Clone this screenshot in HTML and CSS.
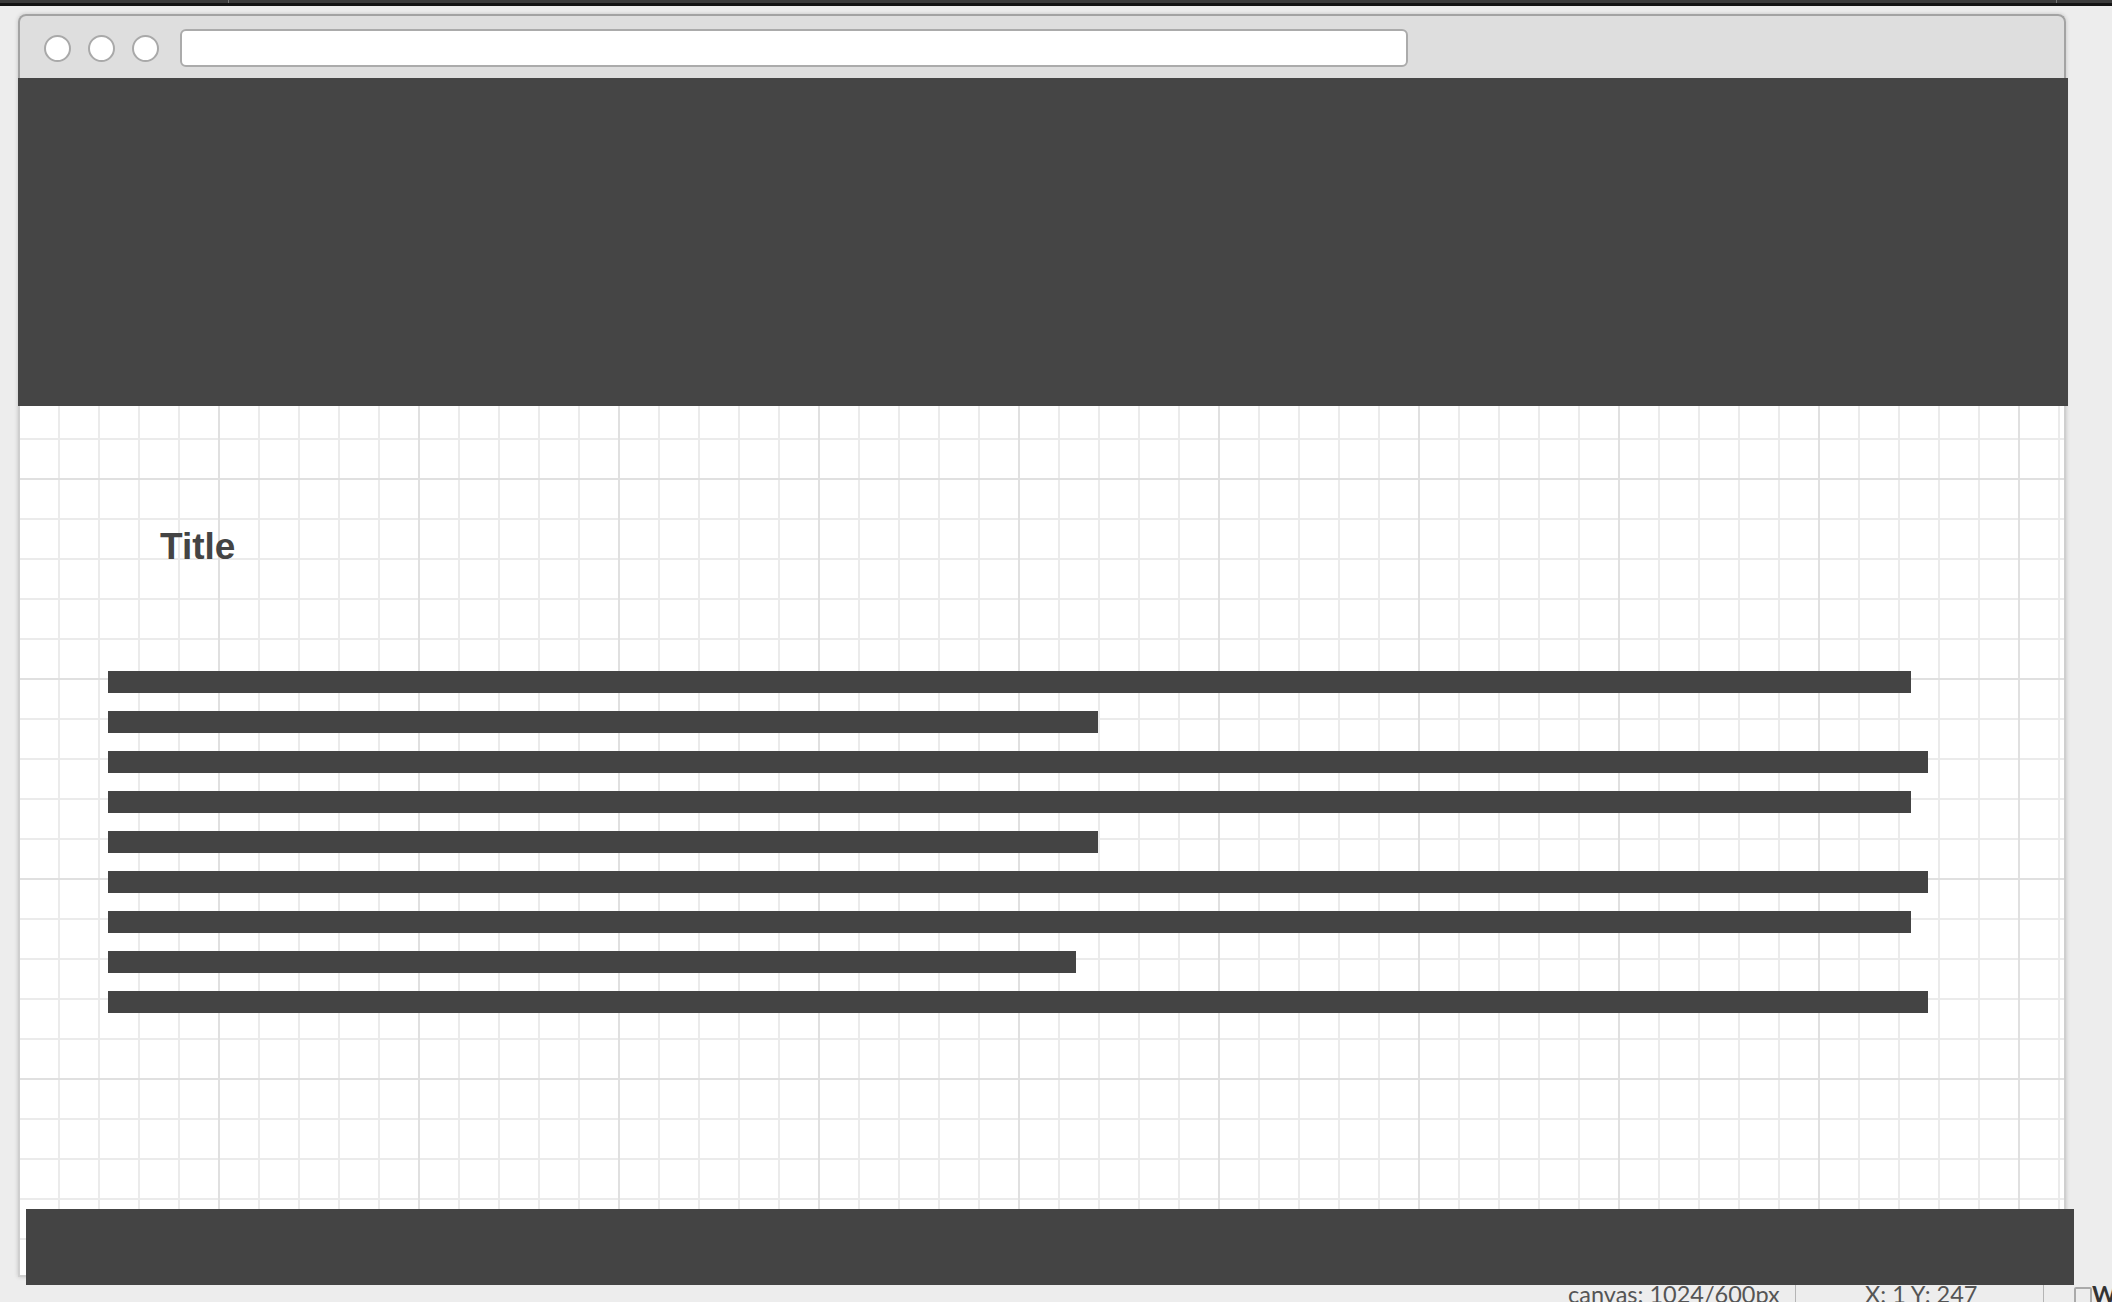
FILE: index.html
```html
<!DOCTYPE html>
<html lang="en">
<head>
<meta charset="utf-8">
<title>Wireframe</title>
<link rel="stylesheet" href="styles.css">
</head>
<body>
  <div class="topstrip">
    <div class="strip-seg strip-a"></div>
    <div class="strip-seg strip-b"></div>
    <div class="strip-seg strip-c"></div>
  </div>
  <div class="window">
    <div class="chrome">
      <span class="dot"></span>
      <span class="dot"></span>
      <span class="dot"></span>
      <div class="address"></div>
    </div>
    <div class="header"></div>
    <div class="canvas">
      <h1 class="title">Title</h1>
      <div class="lines">
        <div class="bar" style="width:1803px"></div>
        <div class="bar" style="width:990px"></div>
        <div class="bar" style="width:1820px"></div>
        <div class="bar" style="width:1803px"></div>
        <div class="bar" style="width:990px"></div>
        <div class="bar" style="width:1820px"></div>
        <div class="bar" style="width:1803px"></div>
        <div class="bar" style="width:968px"></div>
        <div class="bar" style="width:1820px"></div>
      </div>
    </div>
  </div>
  <div class="footer"></div>
  <div class="status">
    <span class="stat stat-size">canvas: 1024/600px</span>
    <span class="sep"></span>
    <span class="stat stat-pos">X: 1 Y: 247</span>
    <span class="sep"></span>
    <span class="check"></span>
    <span class="check-label">W</span>
  </div>
</body>
</html>
```

FILE: styles.css
```css
* { box-sizing: border-box; }

html, body {
  margin: 0;
  padding: 0;
}

body {
  width: 2112px;
  height: 1302px;
  overflow: hidden;
  background: #ededed;
  font-family: "Liberation Sans", Arial, sans-serif;
  position: relative;
}

.topstrip {
  height: 6px;
  display: flex;
  background: #141414;
}

.strip-seg {
  height: 3px;
  background: #3c3c3c;
}

.strip-a { width: 229px; border-right: 1px solid #777; }
.strip-b { width: 1828px; border-right: 1px solid #777; }
.strip-c { flex: 1; }

.window {
  margin: 8px 0 0 18px;
  width: 2048px;
  box-shadow: 0 0 4px rgba(0, 0, 0, 0.18);
  border-radius: 8px 8px 0 0;
}

.chrome {
  height: 64px;
  background: #dedede;
  border: 2px solid #a3a3a3;
  border-bottom: 0;
  border-radius: 8px 8px 0 0;
  padding: 2px 0 0 24px;
  display: flex;
  align-items: center;
}

.dot {
  width: 27px;
  height: 27px;
  border-radius: 50%;
  background: #fff;
  border: 2px solid #a9a9a9;
  margin-right: 17px;
  flex: none;
}

.dot:nth-child(3) { margin-right: 21px; }

.address {
  width: 1228px;
  height: 38px;
  background: #fff;
  border: 2px solid #ababab;
  border-radius: 6px;
}

.header {
  height: 328px;
  width: 2050px;
  background: #454545;
}

.canvas {
  height: 871px;
  border-left: 2px solid #cfcfcf;
  border-right: 2px solid #cfcfcf;
  border-bottom: 2px solid #cfcfcf;
  background-color: #fff;
  background-image:
    linear-gradient(to right, #e0e0e0 0, #e0e0e0 2px, transparent 2px),
    linear-gradient(to bottom, #e0e0e0 0, #e0e0e0 2px, transparent 2px),
    linear-gradient(to right, #ebebeb 0, #ebebeb 2px, transparent 2px),
    linear-gradient(to bottom, #ebebeb 0, #ebebeb 2px, transparent 2px);
  background-size: 200px 100%, 100% 200px, 40px 100%, 100% 40px;
  background-position: -2px 0, 0 72px, -2px 0, 0 32px;
  padding-top: 122px;
}

.title {
  margin: 0 0 106px 140px;
  font-family: "Liberation Sans", Arial, sans-serif;
  font-weight: bold;
  font-size: 37px;
  line-height: 37px;
  height: 37px;
  color: #444;
}

.lines {
  display: flex;
  flex-direction: column;
  gap: 18px;
  padding-left: 88px;
}

.bar {
  height: 22px;
  background: #444;
}

.footer {
  position: absolute;
  left: 26px;
  top: 1209px;
  width: 2048px;
  height: 76px;
  background: #444;
}

.status {
  height: 25px;
  display: flex;
  align-items: flex-start;
  white-space: nowrap;
  font-family: Lato, "Liberation Sans", sans-serif;
  font-size: 23.5px;
  line-height: 29px;
  color: #555;
  padding-left: 1568px;
  overflow: hidden;
}

.stat {
  padding-top: 3px;
  flex: none;
  overflow: hidden;
}

.stat-size { width: 227px; }

.stat-pos {
  width: 247px;
  padding-left: 69px;
}

.sep {
  width: 1px;
  height: 30px;
  margin-top: 1px;
  background: #b5b5b5;
  flex: none;
}

.check {
  width: 18px;
  height: 18px;
  margin: 10px 0 0 30px;
  border: 2px solid #aaa;
  border-radius: 2px;
  flex: none;
}

.check-label {
  padding-top: 3px;
  margin-left: 0;
  color: #333;
  font-weight: bold;
}
```
